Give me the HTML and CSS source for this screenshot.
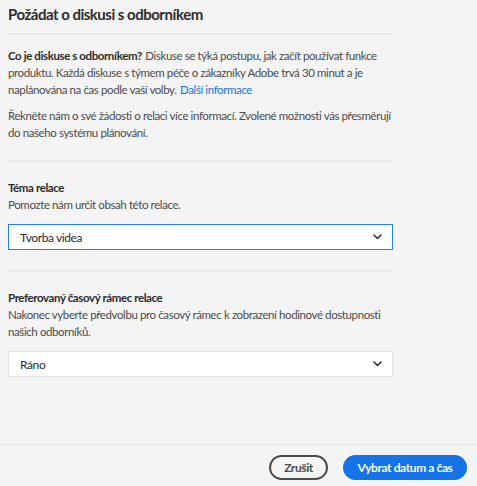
FILE: index.html
```html
<!DOCTYPE html>
<html lang="cs">
<head>
<meta charset="utf-8">
<title>Požádat o diskusi s odborníkem</title>
<link rel="stylesheet" href="styles.css">
</head>
<body>
<div class="dialog">
  <div class="content">
    <h1 class="title">Požádat o diskusi s odborníkem</h1>
    <div class="divider"></div>
    <section class="intro">
      <p class="para"><strong class="strong">Co je diskuse s odborníkem?</strong><span class="text"> Diskuse se týká postupu, jak začít používat funkce produktu. Každá diskuse s týmem péče o zákazníky Adobe trvá 30 minut a je naplánována na čas podle vaší volby. </span><a class="link" href="#">Další informace</a></p>
      <p class="para para-second">Řekněte nám o své žádosti o relaci více informací. Zvolené možnosti vás přesměrují do našeho systému plánování.</p>
    </section>
    <div class="divider"></div>
    <section class="field">
      <div class="label">Téma relace</div>
      <div class="help">Pomozte nám určit obsah této relace.</div>
      <div class="select select-focused">
        <span class="select-value">Tvorba videa</span>
        <svg class="chevron" width="9" height="6" viewBox="0 0 9 6"><path d="M1 1 L4.5 4.5 L8 1" fill="none" stroke="#333" stroke-width="1.6" stroke-linecap="round" stroke-linejoin="round"/></svg>
      </div>
    </section>
    <div class="divider"></div>
    <section class="field">
      <div class="label">Preferovaný časový rámec relace</div>
      <div class="help">Nakonec vyberte předvolbu pro časový rámec k zobrazení hodinové dostupnosti našich odborníků.</div>
      <div class="select">
        <span class="select-value">Ráno</span>
        <svg class="chevron" width="9" height="6" viewBox="0 0 9 6"><path d="M1 1 L4.5 4.5 L8 1" fill="none" stroke="#333" stroke-width="1.6" stroke-linecap="round" stroke-linejoin="round"/></svg>
      </div>
    </section>
  </div>
  <footer class="footer">
    <button class="btn btn-secondary" type="button">Zrušit</button>
    <button class="btn btn-primary" type="button">Vybrat datum a čas</button>
  </footer>
</div>
</body>
</html>
```
FILE: styles.css
```css
html, body {
  margin: 0;
  padding: 0;
  background: #f4f4f4;
}
body {
  font-family: Lato, "Noto Sans", sans-serif;
  color: #4b4b4b;
  letter-spacing: -0.4px;
}
.dialog {
  height: 486px;
  display: flex;
  flex-direction: column;
}
.content {
  flex: 1;
  width: 385px;
  padding: 4px 0 0 8px;
}
.title {
  margin: 0;
  font-size: 15px;
  line-height: 20px;
  font-weight: 700;
  letter-spacing: -0.5px;
  color: #2c2c2c;
}
.divider {
  height: 2px;
  background: #e9e9e9;
}
.title + .divider {
  margin-top: 9px;
}
.intro {
  padding: 12px 0 19px;
}
.para {
  margin: 0;
  font-size: 11.5px;
  line-height: 17px;
}
.para-second {
  margin-top: 9px;
}
.strong {
  font-weight: 700;
  color: #2c2c2c;
  margin-right: 1px;
}
.text {
  color: #4b4b4b;
}
.link {
  color: #1473e6;
  text-decoration: none;
  margin-left: 1px;
}
.field {
  padding: 17px 0 20px;
}
.label {
  font-size: 11.5px;
  line-height: 17px;
  font-weight: 700;
  color: #2c2c2c;
}
.help {
  font-size: 11.5px;
  line-height: 17px;
}
.select {
  margin-top: 11px;
  height: 24px;
  background: #fff;
  border: 1px solid #e1e1e1;
  display: flex;
  align-items: center;
  justify-content: space-between;
  padding: 0 10px 0 11px;
  font-size: 12px;
  color: #2c2c2c;
}
.select-focused {
  border-color: #2680eb;
}
.chevron {
  display: block;
}
.footer {
  border-top: 1px solid #e6e6e6;
  padding: 10px 10px 6px 0;
  display: flex;
  justify-content: flex-end;
  gap: 15px;
}
.btn {
  height: 25px;
  border-radius: 13px;
  font-family: Lato, "Noto Sans", sans-serif;
  font-size: 12px;
  font-weight: 700;
  letter-spacing: -0.4px;
}
.btn-secondary {
  background: transparent;
  border: 2px solid #4b4b4b;
  color: #4b4b4b;
  width: 59px;
  padding: 0;
}
.btn-primary {
  background: #1473e6;
  border: none;
  color: #fff;
  width: 124px;
  padding: 0;
}
```
